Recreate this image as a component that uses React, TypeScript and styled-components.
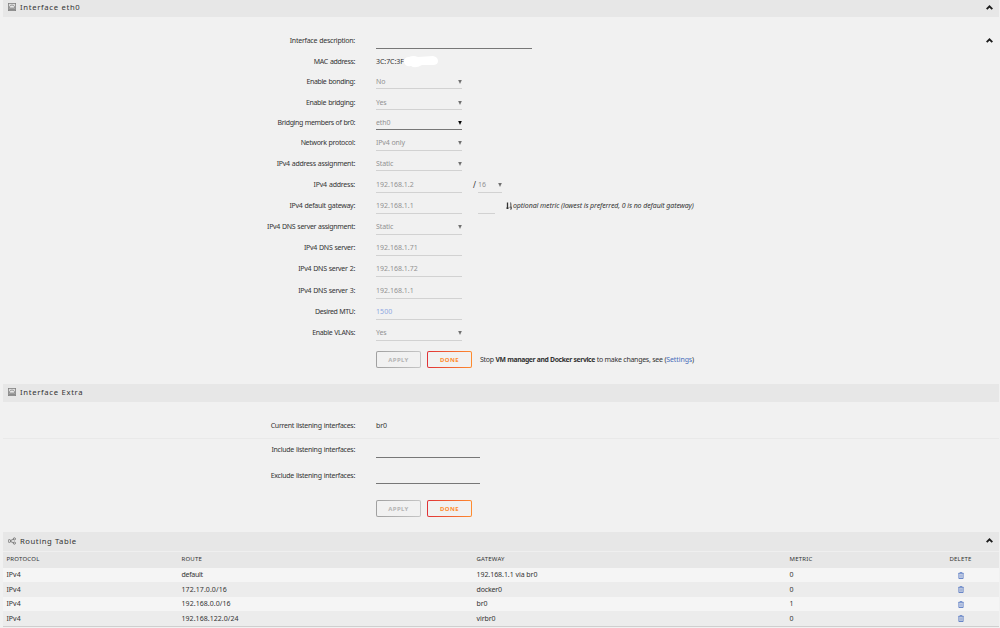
import React from 'react';
import styled, { createGlobalStyle } from 'styled-components';

const Global = createGlobalStyle`
  *{box-sizing:border-box}
  html,body{margin:0;padding:0;background:#f1f1f1}
  body{font-family:"Noto Sans","Open Sans",sans-serif;font-size:7px;line-height:12px;color:#333;overflow:hidden}
`;

const Page = styled.main`
  width: 1000px;
  height: 628px;
  padding: 0 1px 0 3px;
  display: flex;
  flex-direction: column;
  background: #f1f1f1;
  overflow: hidden;
`;

const TitleBar = styled.header<{ $h: number; $up: number }>`
  flex: none;
  height: ${p => p.$h}px;
  padding: 0 6px ${p => p.$up}px 4.5px;
  display: flex;
  align-items: center;
  background: #e7e7e7;
`;

const Title = styled.h1<{ $ls: number }>`
  flex: 1;
  margin: 0 0 0 4.5px;
  font-size: 7.7px;
  font-weight: 400;
  letter-spacing: ${p => p.$ls}px;
  color: #333;
  white-space: nowrap;
`;

const Form = styled.section<{ $h: number }>`
  flex: none;
  height: ${p => p.$h}px;
  position: relative;
`;

const Row = styled.div<{ $h: number }>`
  height: ${p => p.$h}px;
  display: flex;
  align-items: flex-end;
  white-space: nowrap;
`;

const Label = styled.label<{ $up: number; $ls?: number }>`
  width: 352px;
  margin-right: 21px;
  margin-bottom: ${p => p.$up}px;
  text-align: right;
  letter-spacing: ${p => p.$ls ?? -0.28}px;
  word-spacing: 0.5px;
`;

const Field = styled.div<{ $w: number; $tone?: 'dark' | 'mid'; $h?: number }>`
  width: ${p => p.$w}px;
  height: ${p => p.$h ?? 14}px;
  display: flex;
  justify-content: space-between;
  border-bottom: 1px solid ${p => (p.$tone === 'dark' ? '#777' : '#d2d2d2')};
`;

const Value = styled.span<{ $ls?: number; $color?: string }>`
  color: ${p => p.$color ?? '#919191'};
  letter-spacing: ${p => p.$ls ?? -0.12}px;
`;

const Plain = styled.span<{ $ls?: number; $up?: number }>`
  margin-bottom: ${p => p.$up ?? 1}px;
  letter-spacing: ${p => p.$ls ?? 0}px;
`;

const Arrow = styled.i<{ $dark?: boolean }>`
  width: 4px;
  height: 4px;
  margin-top: 4px;
  background: ${p => (p.$dark ? '#000' : '#707070')};
  clip-path: polygon(5% 0, 95% 0, 50% 100%);
`;

const Slash = styled.span`
  width: 16px;
  padding-left: 11px;
  margin-bottom: 2px;
  font-size: 8px;
`;

const Hint = styled.em`
  display: flex;
  align-items: center;
  margin: 0 0 2px 11px;
  gap: 1px;
  letter-spacing: -0.08px;
`;

const Redaction = styled.svg`
  display: block;
`;

const Actions = styled.div<{ $top: number }>`
  margin: ${p => p.$top}px 0 0 373px;
  display: flex;
  align-items: center;
  gap: 6px;
  white-space: nowrap;
`;

const Button = styled.button<{ $kind: 'off' | 'on' }>`
  width: 45px;
  height: 17px;
  padding: 0;
  border: 1px solid transparent;
  border-radius: 2px;
  background: linear-gradient(#f1f1f1, #f1f1f1) padding-box,
    ${p => (p.$kind === 'on'
      ? 'linear-gradient(90deg, #e03237, #ff8c2f)'
      : 'linear-gradient(90deg, #a0a0a0, #c6c6c6)')} border-box;
  color: ${p => (p.$kind === 'on' ? '#ff8c2f' : '#b4b4b4')};
  font: 700 6px/12px "Noto Sans", sans-serif;
  letter-spacing: 0.4px;
`;

const Note = styled.span`
  margin-left: 2px;
  letter-spacing: -0.28px;
  word-spacing: 0.2px;
  & > b { font-size: 6.8px; letter-spacing: -0.37px; }
`;

const Link = styled.a`
  color: #486dba;
  letter-spacing: -0.1px;
`;

const Divider = styled.hr`
  height: 1px;
  margin: 0;
  border: 0;
  background: #e9e9e9;
`;

const SideToggle = styled.div`
  position: absolute;
  right: 6px;
  top: 21px;
  display: flex;
`;

const Table = styled.div`
  border-bottom: 1px solid #cfcfcf;
`;

const Line = styled.div<{ $h: number; $bg: string; $head?: boolean }>`
  display: grid;
  grid-template-columns: 175px 295px 313px 136px 70px;
  align-items: center;
  height: ${p => p.$h}px;
  padding: 0 0 ${p => (p.$head ? 2 : 0)}px 3.5px;
  border-top: ${p => (p.$head ? '1px solid #efefef' : 'none')};
  background: ${p => p.$bg};
  font-size: ${p => (p.$head ? 6 : 7)}px;
  letter-spacing: ${p => (p.$head ? 0.22 : 0)}px;
`;

const Cell = styled.span<{ $center?: boolean; $ls?: number }>`
  display: flex;
  justify-content: ${p => (p.$center ? 'center' : 'flex-start')};
  letter-spacing: ${p => (p.$ls === undefined ? 'inherit' : p.$ls + 'px')};
`;

const Port = () => (
  <svg width="8" height="8" viewBox="0 0 8 8">
    <rect x=".4" y=".4" width="7.2" height="7.2" fill="#dcdcdc" stroke="#808080" strokeWidth=".8" />
    <path d="M1.5 5V3.5L3 2.2H5L6.5 3.5V5Z" fill="#e7e7e7" stroke="#888" strokeWidth=".8" />
    <path d="M.5 6.3H7.5" stroke="#8c8c8c" strokeWidth="1.8" />
  </svg>
);

const Share = () => (
  <svg width="8" height="8" viewBox="0.5 0 8 8" fill="none" stroke="#666" strokeWidth=".8">
    <circle cx="1.9" cy="4" r="1.4" />
    <circle cx="6.9" cy="1.9" r="1.1" />
    <circle cx="6.9" cy="6.1" r="1.1" />
    <path d="M3.2 3.4L5.9 2.3M3.2 4.6L5.9 5.7" />
  </svg>
);

const Chevron = () => (
  <svg width="7" height="5" viewBox="0 0 7 5">
    <path d="M.7 4.2L3.5 1.4L6.3 4.2" fill="none" stroke="#1c1c1c" strokeWidth="1.9" />
  </svg>
);

const SortIcon = () => (
  <svg width="6" height="8" viewBox="0 0 6 8" fill="none" stroke="#333">
    <path d="M1.5 .5V7" strokeWidth="1.3" />
    <path d="M.2 5.5L1.5 7L2.8 5.5" strokeWidth=".9" />
    <path d="M4 1.1L4.8 .8V3.2M4 3.2H5.6M4.2 4.6H5.4V7.2H4.1M4.2 4.6V5.9H5.4" strokeWidth=".7" />
  </svg>
);

const Trash = () => (
  <svg width="6" height="7" viewBox="0 0 6 7" fill="none" stroke="#5b7cc4">
    <path d="M.2 1.4H5.8M2 1.2V.4H4V1.2" strokeWidth=".8" />
    <path d="M.9 1.6V6.5H5.1V1.6" strokeWidth=".9" />
    <path d="M2.2 2.3V5.8M3 2.3V5.8M3.8 2.3V5.8" strokeWidth=".45" />
  </svg>
);

type Item = {
  h: number; label: string; low?: boolean; value?: string; ls?: number; lls?: number;
  select?: boolean; active?: boolean; color?: string; extra?: React.ReactNode;
};

const items: Item[] = [
  { h: 21, label: 'Enable bonding:', value: 'No', select: true, low: true, lls: -0.36 },
  { h: 21, label: 'Enable bridging:', value: 'Yes', select: true, low: true, lls: -0.34 },
  { h: 20, label: 'Bridging members of br0:', value: 'eth0', select: true, active: true, low: true, lls: -0.38 },
  { h: 21, label: 'Network protocol:', value: 'IPv4 only', select: true, lls: -0.32 },
  { h: 20, label: 'IPv4 address assignment:', value: 'Static', select: true, low: true },
  {
    h: 22, label: 'IPv4 address:', value: '192.168.1.2', ls: 0, lls: -0.22,
    extra: <><Slash>/</Slash><Field $w={24}><Value $ls={0}>16</Value><Arrow /></Field></>,
  },
  {
    h: 21, label: 'IPv4 default gateway:', value: '192.168.1.1', ls: 0,
    extra: <><Slash /><Field $w={17} /><Hint><SortIcon />optional metric (lowest is preferred, 0 is no default gateway)</Hint></>,
  },
  { h: 21, label: 'IPv4 DNS server assignment:', value: 'Static', select: true, lls: -0.31 },
  { h: 21, label: 'IPv4 DNS server:', value: '192.168.1.71', ls: 0 },
  { h: 21, label: 'IPv4 DNS server 2:', value: '192.168.1.72', ls: 0 },
  { h: 22, label: 'IPv4 DNS server 3:', value: '192.168.1.1', ls: 0 },
  { h: 21, label: 'Desired MTU:', value: '1500', ls: 0.1, color: '#8fa8e2', lls: -0.4 },
  { h: 21, label: 'Enable VLANs:', value: 'Yes', select: true, lls: -0.36 },
];

const routes = [
  { route: 'default', gateway: '192.168.1.1 via br0', metric: '0', h: 14, rs: -0.3, gs: -0.05 },
  { route: '172.17.0.0/16', gateway: 'docker0', metric: '0', h: 15, rs: 0.08, gs: -0.15 },
  { route: '192.168.0.0/16', gateway: 'br0', metric: '1', h: 14, rs: 0.06, gs: -0.1 },
  { route: '192.168.122.0/24', gateway: 'virbr0', metric: '0', h: 15, rs: 0.05, gs: -0.1 },
];

export default function App() {
  return (
    <>
      <Global />
      <Page>
        <TitleBar $h={17} $up={3}><Port /><Title $ls={0.68}>Interface eth0</Title><Chevron /></TitleBar>
        <Form $h={367}>
          <SideToggle><Chevron /></SideToggle>
          <Row $h={32}><Label $up={2} $ls={-0.25}>Interface description:</Label><Field $w={156} $tone="dark" /></Row>
          <Row $h={19}>
            <Label $up={0} $ls={-0.34}>MAC address:</Label><Plain $up={0} $ls={-0.05}>3C:7C:3F</Plain>
            <Redaction width="35" height="14" viewBox="0 0 35 14">
              <path d="M0 8Q0 3 5 3Q9 1 14 3L29 2Q34 3 34 7Q34 11 29 11H18Q11 15 7 12Q1 13 0 8Z" fill="#fff" />
            </Redaction>
          </Row>
          {items.map(it => (
            <Row key={it.label} $h={it.h}>
              <Label $up={it.low ? 1 : 2} $ls={it.lls}>{it.label}</Label>
              <Field $w={86} $h={it.low ? 13 : 14} $tone={it.active ? 'dark' : 'mid'}>
                <Value $ls={it.ls} $color={it.color}>{it.value}</Value>
                {it.select && <Arrow $dark={it.active} />}
              </Field>
              {it.extra}
            </Row>
          ))}
          <Actions $top={10}>
            <Button $kind="off">APPLY</Button>
            <Button $kind="on">DONE</Button>
            <Note>Stop <b>VM manager and Docker service</b> to make changes, see (<Link>Settings</Link>)</Note>
          </Actions>
        </Form>
        <TitleBar $h={18} $up={2}><Port /><Title $ls={0.68}>Interface Extra</Title></TitleBar>
        <Form $h={130}>
          <Row $h={30}><Label $up={0}>Current listening interfaces:</Label><Plain $up={0} $ls={-0.1}>br0</Plain></Row>
          <Row $h={6} />
          <Divider />
          <Row $h={19}><Label $up={2}>Include listening interfaces:</Label><Field $w={104} $tone="dark" /></Row>
          <Row $h={26}><Label $up={2}>Exclude listening interfaces:</Label><Field $w={104} $tone="dark" /></Row>
          <Actions $top={16}>
            <Button $kind="off">APPLY</Button>
            <Button $kind="on">DONE</Button>
          </Actions>
        </Form>
        <TitleBar $h={19} $up={2}><Share /><Title $ls={0.56}>Routing Table</Title><Chevron /></TitleBar>
        <Table>
          <Line $h={17} $bg="#e7e7e7" $head>
            <Cell>PROTOCOL</Cell><Cell>ROUTE</Cell><Cell>GATEWAY</Cell><Cell>METRIC</Cell><Cell $center>DELETE</Cell>
          </Line>
          {routes.map((r, i) => (
            <Line key={r.route} $h={r.h} $bg={i % 2 ? '#ececec' : '#f5f5f5'}>
              <Cell>IPv4</Cell><Cell $ls={r.rs}>{r.route}</Cell><Cell $ls={r.gs}>{r.gateway}</Cell>
              <Cell>{r.metric}</Cell><Cell $center><Trash /></Cell>
            </Line>
          ))}
        </Table>
      </Page>
    </>
  );
}
